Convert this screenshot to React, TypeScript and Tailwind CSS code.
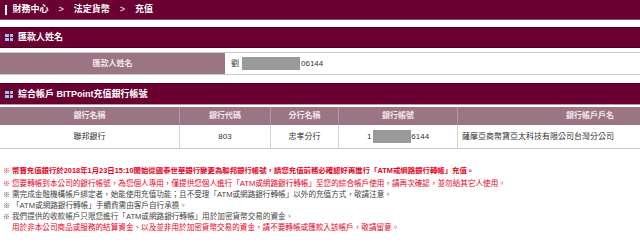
import React from "react";

const Icon = () => (
  <span className="grid grid-cols-2 gap-[1px] w-[8px] h-[7px] mr-[5px]">
    <span className="bg-[#9cc3ea]" />
    <span className="bg-[#9cc3ea]" />
    <span className="bg-[#9cc3ea]" />
    <span className="bg-[#9cc3ea]" />
  </span>
);

const Redact = ({ w }: { w: number }) => (
  <span className="inline-block h-[13px] bg-[#9a9a9a] align-middle" style={{ width: w }} />
);

export default function App() {
  return (
    <div
      className="w-[640px] h-[244px] overflow-hidden bg-white"
      style={{ fontFamily: '"Liberation Sans", "Noto Sans CJK TC", sans-serif' }}
    >
      {/* breadcrumb */}
      <div className="h-[20px] bg-[#6a0032] border-b border-[#8e4d6a] flex items-center pl-[5px] text-[9px] font-bold text-white leading-none">
        <span className="w-[1.5px] h-[10px] bg-white mr-[6px]" />
        <span>財務中心</span>
        <span className="mx-[10px] text-[#d9c0cb]">&gt;</span>
        <span>法定貨幣</span>
        <span className="mx-[10px] text-[#d9c0cb]">&gt;</span>
        <span>充值</span>
      </div>

      {/* section 1 header */}
      <div className="mt-[7px] h-[21px] bg-[#6a0032] border-y border-[#4d0024] flex items-center pl-[5px] text-[9px] font-bold text-white leading-none">
        <Icon />
        <span>匯款人姓名</span>
      </div>

      {/* section 1 row */}
      <div className="mt-[4px] h-[23px] border-y border-[#c9c9c9] flex text-[8px] leading-none">
        <div className="w-[225px] bg-[#9c7584] text-[#f3e6ec] font-bold flex items-center justify-center">
          匯款人姓名
        </div>
        <div className="flex-1 flex items-center pl-[6px] text-[#333]">
          <span>劉</span>
          <span className="ml-[3px]"><Redact w={58} /></span>
          <span className="ml-[1px]">06144</span>
        </div>
      </div>

      {/* section 2 header */}
      <div className="mt-[8px] h-[22px] bg-[#6a0032] border-t border-[#4d0024] border-b border-b-[#b59aa6] flex items-center pl-[5px] text-[9px] font-bold text-white leading-none">
        <Icon />
        <span>綜合帳戶 BITPoint充值銀行帳號</span>
      </div>

      {/* section 2 table */}
      <div className="mt-[2px] w-[722px] text-[8px] leading-none border-b border-[#c9c9c9]">
        <div className="h-[18px] bg-[#9c7584] text-[#f3e6ec] font-bold grid grid-cols-[180px_91px_68px_119px_264px]">
          <div className="flex items-center justify-center border-r border-[#b497a4]">銀行名稱</div>
          <div className="flex items-center justify-center border-r border-[#b497a4]">銀行代碼</div>
          <div className="flex items-center justify-center border-r border-[#b497a4]">分行名稱</div>
          <div className="flex items-center justify-center border-r border-[#b497a4]">銀行帳號</div>
          <div className="flex items-center justify-center">銀行帳戶戶名</div>
        </div>
        <div className="h-[23px] text-[#333] grid grid-cols-[180px_91px_68px_119px_264px]">
          <div className="flex items-center justify-center border-r border-[#d4d4d4]">聯邦銀行</div>
          <div className="flex items-center justify-center border-r border-[#d4d4d4]">803</div>
          <div className="flex items-center justify-center border-r border-[#d4d4d4]">忠孝分行</div>
          <div className="flex items-center justify-center border-r border-[#d4d4d4]">
            <span>1</span>
            <span className="ml-[2px]"><Redact w={38} /></span>
            <span>6144</span>
          </div>
          <div className="flex items-center pl-[4px]">薩摩亞商幣寶亞太科技有限公司台灣分公司</div>
        </div>
      </div>

      {/* notes */}
      <div className="mt-[15px] text-[7.6px] leading-[11px]">
        <div className="flex text-[#e8001c] font-bold h-[13px] items-center">
          <span className="w-[12px] pl-[3px] text-[7px]">※</span>
          <span className="text-[7.4px]">幣寶充值銀行於2018年1月23日15:10開始從國泰世華銀行變更為聯邦銀行帳號，請您充值前務必確認好再進行「ATM或網路銀行轉帳」充值。</span>
        </div>
        <div className="flex text-[#e8001c] h-[12px] items-center">
          <span className="w-[12px] pl-[3px] text-[7px] font-bold">※</span>
          <span>您要轉帳到本公司的銀行帳號，為您個人專用，僅提供您個人進行「ATM或網路銀行轉帳」至您的綜合帳戶使用，請再次確認，並勿給其它人使用。</span>
        </div>
        <div className="flex text-[#444] h-[11px] items-center">
          <span className="w-[12px] pl-[3px] text-[7px]">※</span>
          <span>需完成金融機構帳戶綁定者，始能使用充值功能；且不受理「ATM或網路銀行轉帳」以外的充值方式，敬請注意。</span>
        </div>
        <div className="flex text-[#444] h-[11px] items-center">
          <span className="w-[12px] pl-[3px] text-[7px]">※</span>
          <span>「ATM或網路銀行轉帳」手續費需由客戶自行承擔。</span>
        </div>
        <div className="flex text-[#444] h-[11px] items-center">
          <span className="w-[12px] pl-[3px] text-[7px]">※</span>
          <span>我們提供的收款帳戶只限您進行「ATM或網路銀行轉帳」用於加密貨幣交易的資金。</span>
        </div>
        <div className="flex text-[#e8001c] h-[11px] items-center">
          <span className="w-[12px]" />
          <span>用於非本公司商品或服務的結算資金、以及並非用於加密貨幣交易的資金，請不要轉帳或匯款入該帳戶，敬請留意。</span>
        </div>
      </div>
    </div>
  );
}
